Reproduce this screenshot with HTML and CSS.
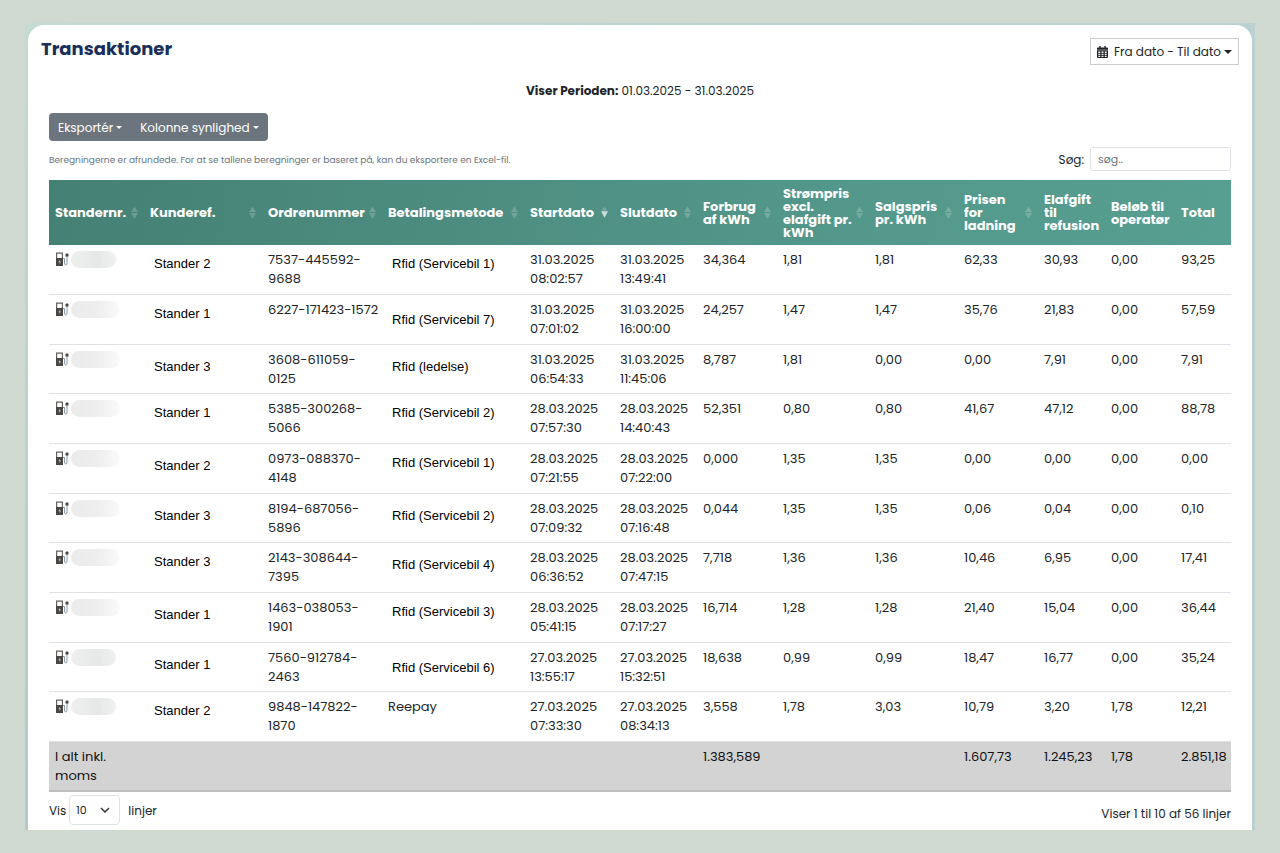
FILE: index.html
```html
<!DOCTYPE html>
<html lang="da">
<head>
<meta charset="utf-8">
<title>Transaktioner</title>
<link rel="stylesheet" href="styles.css">
</head>
<body>
<svg class="sprite" aria-hidden="true">
  <symbol id="sort" viewBox="0 0 8 14"><path d="M4 0 8 6.500H0zM4 14 0 7.500h8z" fill="currentColor"/></symbol>
  <symbol id="sort-down" viewBox="0 0 8 14"><path d="M4 0 7.500 5h-7z" fill="currentColor" opacity=".3"/><path d="M4 13 0 5.500h8z" fill="currentColor"/></symbol>
  <symbol id="charger" viewBox="0 0 14 14"><path d="M1.600 1.100h5.800v12H1.600z" fill="#fff" stroke="#66625f" stroke-width="1.200"/><path d="M1 6h7v8H1z" fill="#4a4644"/><path d="m5 7.500-1.600 2.700h1.300l-.4 2L6 9.600H4.700z" fill="#ccc"/><path d="M8 6.500h1.500V11q0 2 1.300 2T12 11V4" fill="none" stroke="#8b9aa6"/><path d="M10.500 2.500 12 1l1.500 1.500v2h-3z" fill="#4a4644"/></symbol>
</svg>
<main class="frame">
  <div class="card">
    <header class="card-head">
      <h1>Transaktioner</h1>
      <button class="date-button" type="button">
        <svg class="calendar" viewBox="0 0 12 13" aria-hidden="true"><path d="M2.500 0h1.500v1.500h4V0h1.500v1.500H11q1 0 1 1V4H0V2.500q0-1 1-1h1.500z" fill="#212529"/><path d="M0 4.700h12V12q0 1-1 1H1q-1 0-1-1z" fill="#212529"/><path d="M1.500 6h2v1.500h-2zm3.500 0h2v1.500H5zm3.500 0h2v1.500h-2zm-7 2.300h2v1.500h-2zm3.500 0h2v1.500H5zm3.500 0h2v1.500h-2zm-7 2.300h2V12h-2zm3.500 0h2V12H5zm3.500 0h2V12h-2z" fill="#fff"/></svg>
        <span>Fra dato - Til dato</span><span class="caret"></span>
      </button>
    </header>
    <p class="period"><strong>Viser Perioden:</strong> 01.03.2025 - 31.03.2025</p>
    <section class="content">
      <div class="button-group">
        <button type="button">Eksportér<span class="caret small"></span></button>
        <button type="button">Kolonne synlighed<span class="caret small"></span></button>
      </div>
      <div class="filter">
        <p class="note">Beregningerne er afrundede. For at se tallene beregninger er baseret på, kan du eksportere en Excel-fil.</p>
        <label for="search">Søg:</label>
        <input id="search" type="search" placeholder="søg..">
      </div>
      <table>
        <colgroup><col class="w95"><col class="w118"><col class="w120"><col class="w142"><col class="w90"><col class="w83"><col class="w80"><col class="w92"><col class="w89"><col class="w80"><col class="w67"><col class="w70"><col class="w56"></colgroup>
        <thead>
          <tr>
            <th>Standernr.<svg class="sort"><use href="#sort"/></svg></th>
            <th>Kunderef.<svg class="sort"><use href="#sort"/></svg></th>
            <th>Ordrenummer<svg class="sort"><use href="#sort"/></svg></th>
            <th>Betalingsmetode<svg class="sort"><use href="#sort"/></svg></th>
            <th>Startdato<svg class="sort active"><use href="#sort-down"/></svg></th>
            <th>Slutdato<svg class="sort"><use href="#sort"/></svg></th>
            <th>Forbrug<br>af kWh<svg class="sort"><use href="#sort"/></svg></th>
            <th>Strømpris<br>excl.<br>elafgift pr.<br>kWh<svg class="sort"><use href="#sort"/></svg></th>
            <th>Salgspris<br>pr. kWh<svg class="sort"><use href="#sort"/></svg></th>
            <th>Prisen<br>for<br>ladning<svg class="sort"><use href="#sort"/></svg></th>
            <th>Elafgift<br>til<br>refusion</th>
            <th>Beløb til<br>operatør</th>
            <th>Total</th>
          </tr>
        </thead>
        <tbody>
          <tr><td><span class="stand"><svg class="charger"><use href="#charger"/></svg><i class="smudge short"></i></span></td><td class="plain">Stander 2</td><td>7537-445592-<br>9688</td><td class="plain">Rfid (Servicebil 1)</td><td>31.03.2025<br>08:02:57</td><td>31.03.2025<br>13:49:41</td><td>34,364</td><td>1,81</td><td>1,81</td><td>62,33</td><td>30,93</td><td>0,00</td><td>93,25</td></tr>
          <tr><td><span class="stand"><svg class="charger"><use href="#charger"/></svg><i class="smudge"></i></span></td><td class="plain">Stander 1</td><td>6227-171423-1572</td><td class="plain lowest">Rfid (Servicebil 7)</td><td>31.03.2025<br>07:01:02</td><td>31.03.2025<br>16:00:00</td><td>24,257</td><td>1,47</td><td>1,47</td><td>35,76</td><td>21,83</td><td>0,00</td><td>57,59</td></tr>
          <tr><td><span class="stand"><svg class="charger"><use href="#charger"/></svg><i class="smudge"></i></span></td><td class="plain low">Stander 3</td><td>3608-611059-<br>0125</td><td class="plain low">Rfid (ledelse)</td><td>31.03.2025<br>06:54:33</td><td>31.03.2025<br>11:45:06</td><td>8,787</td><td>1,81</td><td>0,00</td><td>0,00</td><td>7,91</td><td>0,00</td><td>7,91</td></tr>
          <tr><td><span class="stand"><svg class="charger"><use href="#charger"/></svg><i class="smudge"></i></span></td><td class="plain">Stander 1</td><td>5385-300268-<br>5066</td><td class="plain">Rfid (Servicebil 2)</td><td>28.03.2025<br>07:57:30</td><td>28.03.2025<br>14:40:43</td><td>52,351</td><td>0,80</td><td>0,80</td><td>41,67</td><td>47,12</td><td>0,00</td><td>88,78</td></tr>
          <tr><td><span class="stand"><svg class="charger"><use href="#charger"/></svg><i class="smudge"></i></span></td><td class="plain low">Stander 2</td><td>0973-088370-<br>4148</td><td class="plain">Rfid (Servicebil 1)</td><td>28.03.2025<br>07:21:55</td><td>28.03.2025<br>07:22:00</td><td>0,000</td><td>1,35</td><td>1,35</td><td>0,00</td><td>0,00</td><td>0,00</td><td>0,00</td></tr>
          <tr><td><span class="stand"><svg class="charger"><use href="#charger"/></svg><i class="smudge"></i></span></td><td class="plain low">Stander 3</td><td>8194-687056-<br>5896</td><td class="plain low">Rfid (Servicebil 2)</td><td>28.03.2025<br>07:09:32</td><td>28.03.2025<br>07:16:48</td><td>0,044</td><td>1,35</td><td>1,35</td><td>0,06</td><td>0,04</td><td>0,00</td><td>0,10</td></tr>
          <tr><td><span class="stand"><svg class="charger"><use href="#charger"/></svg><i class="smudge"></i></span></td><td class="plain">Stander 3</td><td>2143-308644-<br>7395</td><td class="plain low">Rfid (Servicebil 4)</td><td>28.03.2025<br>06:36:52</td><td>28.03.2025<br>07:47:15</td><td>7,718</td><td>1,36</td><td>1,36</td><td>10,46</td><td>6,95</td><td>0,00</td><td>17,41</td></tr>
          <tr><td><span class="stand"><svg class="charger"><use href="#charger"/></svg><i class="smudge"></i></span></td><td class="plain low">Stander 1</td><td>1463-038053-<br>1901</td><td class="plain">Rfid (Servicebil 3)</td><td>28.03.2025<br>05:41:15</td><td>28.03.2025<br>07:17:27</td><td>16,714</td><td>1,28</td><td>1,28</td><td>21,40</td><td>15,04</td><td>0,00</td><td>36,44</td></tr>
          <tr><td><span class="stand"><svg class="charger"><use href="#charger"/></svg><i class="smudge short"></i></span></td><td class="plain low">Stander 1</td><td>7560-912784-<br>2463</td><td class="plain lowest">Rfid (Servicebil 6)</td><td>27.03.2025<br>13:55:17</td><td>27.03.2025<br>15:32:51</td><td>18,638</td><td>0,99</td><td>0,99</td><td>18,47</td><td>16,77</td><td>0,00</td><td>35,24</td></tr>
          <tr><td><span class="stand"><svg class="charger"><use href="#charger"/></svg><i class="smudge short"></i></span></td><td class="plain">Stander 2</td><td>9848-147822-<br>1870</td><td>Reepay</td><td>27.03.2025<br>07:33:30</td><td>27.03.2025<br>08:34:13</td><td>3,558</td><td>1,78</td><td>3,03</td><td>10,79</td><td>3,20</td><td>1,78</td><td>12,21</td></tr>
        </tbody>
        <tfoot>
          <tr><td>I alt inkl.<br>moms</td><td></td><td></td><td></td><td></td><td></td><td>1.383,589</td><td></td><td></td><td>1.607,73</td><td>1.245,23</td><td>1,78</td><td>2.851,18</td></tr>
        </tfoot>
      </table>
      <footer class="table-foot">
        <div class="length">
          <label for="length">Vis</label>
          <span class="select-wrap"><select id="length"><option>10</option><option>25</option><option>50</option></select><svg class="chevron" viewBox="0 0 10 6" aria-hidden="true"><path d="m1 1 4 4 4-4" fill="none" stroke="#343a40" stroke-width="1.500"/></svg></span>
          <span class="unit">linjer</span>
        </div>
        <p class="info">Viser 1 til 10 af 56 linjer</p>
      </footer>
    </section>
  </div>
</main>
</body>
</html>
```
FILE: styles.css
```css
* { box-sizing: border-box; }
body {
  margin: 0;
  padding: 23px 25px;
  background: #cfd9d0;
  color: #212529;
  font: 12px/19px Poppins, Inter, "Open Sans", sans-serif;
}
h1, p { margin: 0; }
button, input, select { font: inherit; color: inherit; }
.sprite { position: absolute; width: 0; height: 0; }
.frame {
  padding: 2px 3px 0;
  background: linear-gradient(90deg, transparent, #bccfd1), linear-gradient(#c3dbd3, #b5c8cc);
}
.card { background: #fff; border-radius: 16px 16px 0 0; padding-bottom: 5px; }
.card-head {
  display: flex;
  justify-content: space-between;
  align-items: flex-start;
  padding: 13px 13px 0;
}
h1 { font-size: 18px; line-height: 21px; font-weight: 700; color: #1b2f5b; }
.date-button {
  display: flex;
  align-items: center;
  height: 27px;
  padding: 0 6px;
  border: 1px solid #ccc;
  background: #fff;
}
.calendar { width: 11px; height: 12px; margin-right: 6px; }
.caret {
  margin-left: 3px;
  border: 4px solid transparent;
  border-top-color: currentColor;
  border-bottom: 0;
}
.caret.small { border-width: 3px; border-bottom: 0; margin-left: 3px; }
.period { margin: 16px 0 12px; text-align: center; line-height: 20px; }
.content { padding: 0 21px; }
.button-group {
  display: inline-flex;
  vertical-align: top;
  border-radius: 4px;
  overflow: hidden;
  background: #6c757d;
}
.button-group button {
  display: flex;
  align-items: center;
  height: 28px;
  padding: 0 9px;
  border: 0;
  background: none;
  color: #fff;
}
.filter { display: flex; align-items: center; margin: 6px 0 9px; }
.note { flex: 1; font-size: 9px; color: #6c757d; padding-top: 2px; }
.filter label { margin-right: 6px; }
.filter input {
  width: 141px;
  height: 24px;
  padding: 0 7px;
  border: 1px solid #dee2e6;
  border-radius: 3px;
  background: #fff;
  font-size: 11px;
}
.filter input::placeholder { color: #6c757d; }
table {
  width: 100%;
  table-layout: fixed;
  border-collapse: separate;
  border-spacing: 0;
  font-size: 13px;
}
.w56 { width: 56px; } .w67 { width: 67px; } .w70 { width: 70px; }
.w80 { width: 80px; } .w83 { width: 83px; } .w89 { width: 89px; }
.w90 { width: 90px; } .w92 { width: 92px; } .w95 { width: 95px; }
.w118 { width: 118px; } .w120 { width: 120px; } .w142 { width: 142px; }
thead tr { background: linear-gradient(100deg, #458074, #529689 60%, #579f91); }
th {
  position: relative;
  height: 65px;
  padding: 0 0 0 6px;
  text-align: left;
  vertical-align: middle;
  white-space: nowrap;
  color: #fff;
  line-height: 13px;
  font-weight: 700;
}
.sort {
  position: absolute;
  right: 6px;
  top: 50%;
  width: 7px;
  height: 13px;
  margin-top: -7px;
  color: #fff;
  opacity: .2;
}
.sort.active { opacity: .7; }
td { padding: 5px 0 6px 6px; vertical-align: top; white-space: nowrap; }
tbody td { border-bottom: 1px solid #dee2e6; }
tbody tr:nth-child(3n) td { padding-bottom: 5px; }
tbody .plain {
  padding: 11px 0 0 10px;
  font: 13px/16px "Liberation Sans", Arial, sans-serif;
  color: #000;
}
tbody .low { padding-top: 14px; }
tbody .lowest { padding-top: 17px; }
.stand { display: flex; align-items: center; height: 18px; }
.charger { width: 14px; height: 14px; }
.smudge {
  width: 49px;
  height: 17px;
  margin-left: 2px;
  border-radius: 9px;
  background: linear-gradient(90deg, #ebebeb, #efefef 60%, #fafafa);
}
.smudge.short { width: 45px; background: linear-gradient(90deg, #efefef, #e6e8e8 60%, #f1f1f1); }
tfoot td { padding-bottom: 5px; background: #d3d3d3; border-bottom: 2px solid #bfbfbf; color: #111; }
.table-foot { display: flex; justify-content: space-between; align-items: center; padding-top: 3px; }
.length { display: flex; align-items: center; }
.select-wrap { position: relative; margin: 0 8px 0 3px; }
.select-wrap select {
  display: block;
  width: 51px;
  height: 30px;
  padding: 0 6px;
  border: 1px solid #dee2e6;
  border-radius: 4px;
  background: #fff;
  appearance: none;
  font-size: 11px;
}
.chevron { position: absolute; right: 10px; top: 12px; width: 10px; height: 6px; pointer-events: none; }
.info { padding-top: 6px; }
```
